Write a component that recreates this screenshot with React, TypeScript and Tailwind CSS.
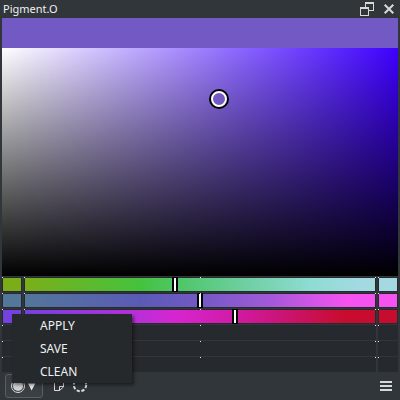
const stopDots = [2, 24, 200, 375, 378];

type Row = { left?: string; main?: string; right?: string; handle?: string };

const rows: Row[] = [
  {
    left: 'bg-[#7aae18]',
    main: 'bg-[linear-gradient(to_right,#7aae18_0%,#45c23e_33%,#51c76e_46%,#70d0a4_64%,#8fdcd4_82%,#a4d9e2_96%)]',
    right: 'bg-[#a4d9e2]',
    handle: 'ml-[147px]',
  },
  {
    left: 'bg-[#537799]',
    main: 'bg-[linear-gradient(to_right,#537799_0%,#5a5ab6_33%,#7359c4_50%,#a059d8_69%,#f652f0_92%)]',
    right: 'bg-[#f652f0]',
    handle: 'ml-[172px]',
  },
  {
    left: 'bg-[#7542e0]',
    main: 'bg-[linear-gradient(to_right,#7542e0_0%,#b530d8_31%,#d625d0_43%,#d21cab_58%,#cc1686_69%,#c80c2f_91%)]',
    right: 'bg-[#c80c2f]',
    handle: 'ml-[207px]',
  },
  {},
  {},
  {},
];

function Channel({ row }: { row: Row }) {
  return (
    <div className="relative flex h-[15px] gap-[2px]">
      <div className="w-5 bg-[#26292d] p-px"><div className={`h-full ${row.left ?? ''}`} /></div>
      <div className="w-[352px] bg-[#26292d] p-px">
        <div className={`h-full ${row.main ?? ''}`}>
          {row.handle && (
            <div className="flex h-full">
              <div className={`-my-px w-[6px] border-x-2 border-y border-black bg-white ${row.handle}`} />
            </div>
          )}
        </div>
      </div>
      <div className="w-5 bg-[#26292d] p-px"><div className={`h-full ${row.right ?? ''}`} /></div>
      {stopDots.map((x) => (
        <i key={x} className="absolute top-0 size-px bg-[#e8e8e8]" style={{ left: x - 2 }} />
      ))}
    </div>
  );
}

export default function App() {
  return (
    <div className="relative flex h-[400px] w-[400px] flex-col overflow-hidden bg-[#31363b] px-[2px] font-['Noto_Sans',sans-serif] text-[12px] text-[#eff0f1]">
      <header className="flex h-[18px] items-center justify-between">
        <span className="pl-px text-[11px] leading-[18px]">Pigment.O</span>
        <svg width="40" height="18" viewBox="358 0 40 18" fill="#d8d8d8" shapeRendering="crispEdges">
          <path d="M365 2H374V11H369V10H373V4H366V7H365Z" />
          <path fillRule="evenodd" d="M360 7H369V16H360ZM361 9V15H368V9Z" />
          <path d="M384.7 4.7L393.3 13.3M393.3 4.7L384.7 13.3" stroke="#d8d8d8" strokeWidth="2" shapeRendering="auto" />
        </svg>
      </header>
      <div className="h-[30px] bg-[#7359c4]" />
      <div className="relative h-[228px] bg-[linear-gradient(to_top,#000,transparent),linear-gradient(to_right,#fff,#3e00ff)]">
        <div className="absolute left-[207px] top-[41px] size-5 rounded-full bg-black p-[2px]">
          <div className="size-4 rounded-full border-2 border-white bg-[#7359c4]" />
        </div>
      </div>
      <div className="mt-px flex flex-col gap-px">
        {rows.map((row, i) => <Channel key={i} row={row} />)}
      </div>
      <footer className="flex h-7 items-center justify-between pl-[3px] pr-[6px]">
        <div className="flex items-center">
          <button className="flex h-6 w-[38px] items-center rounded-[3px] border border-[#5a5f63] bg-gradient-to-b from-[#373c41] to-[#3b4045]">
            <svg width="36" height="22" viewBox="6 375 36 22">
              <circle cx="18" cy="386" r="6.5" fill="none" stroke="#dcdcdc" />
              <circle cx="18" cy="386" r="5" fill="#cfcfcf" />
              <path d="M28 383.5H35.3L31.6 390.5Z" fill="#e8e8e8" />
            </svg>
          </button>
          <svg width="46" height="24" viewBox="43 374 46 24" fill="none" stroke="#dcdcdc">
            <path d="M54.5 380.5H63.5V387L59.5 390.5H54.5ZM63.5 386.5H59.5V390.5" />
            <circle cx="80" cy="385" r="6.2" strokeWidth="2" strokeDasharray="3.2 1.67" />
          </svg>
        </div>
        <svg width="12" height="10" fill="#d8d8d8"><path d="M0 0H12V2H0ZM0 4H12V6H0ZM0 8H12V10H0Z" /></svg>
      </footer>
      <div className="absolute left-3 top-[314px] flex h-[69px] w-[120px] flex-col bg-[#25292c] pl-7 shadow-[2px_2px_3px_rgba(0,0,0,0.45)]">
        {['APPLY', 'SAVE', 'CLEAN'].map((label) => (
          <span key={label} className="h-[23px] leading-[23px]">{label}</span>
        ))}
      </div>
    </div>
  );
}
